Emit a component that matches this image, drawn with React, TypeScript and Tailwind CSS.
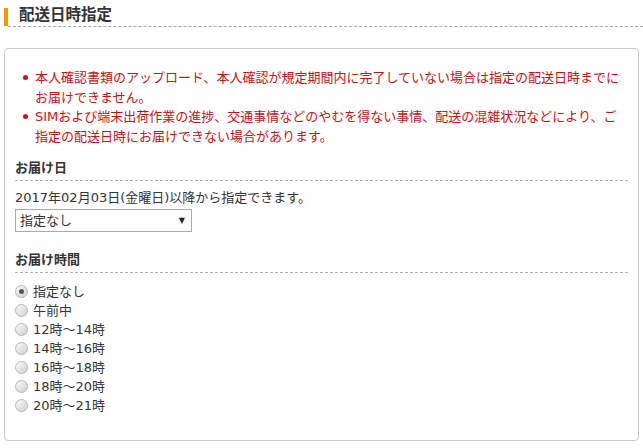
const notes = [
  ['本人確認書類のアップロード、本人確認が規定期間内に完了していない場合は指定の配送日時までに', 'お届けできません。'],
  ['SIMおよび端末出荷作業の進捗、交通事情などのやむを得ない事情、配送の混雑状況などにより、ご', '指定の配送日時にお届けできない場合があります。'],
];

const timeSlots = ['指定なし', '午前中', '12時～14時', '14時～16時', '16時～18時', '18時～20時', '20時～21時'];

function Radio({ checked }: { checked?: boolean }) {
  return (
    <span className="flex h-[13px] w-[13px] shrink-0 items-center justify-center rounded-full border border-[#b4b4b4] bg-linear-to-br from-[#fbfbfb] to-[#cfcfcf]">
      {checked && <span className="h-[5px] w-[5px] rounded-full bg-[#555]" />}
    </span>
  );
}

function SectionHeading({ children }: { children: React.ReactNode }) {
  return (
    <h3 className="border-b border-dashed border-[#b0b0b0] pb-[2px] text-[13px] font-bold leading-[20px] text-[#333]">
      {children}
    </h3>
  );
}

export default function App() {
  return (
    <div className="h-[448px] w-[643px] overflow-hidden bg-white font-['DejaVu_Sans','Noto_Sans_CJK_JP',sans-serif] text-[#333]">
      {/* page title */}
      <div className="pl-[4px] pt-[8px]">
        <div className="flex h-[18px] items-start">
          <span className="h-full w-[4px] bg-[#f39800]" />
          <h2 className="-mt-[2px] ml-[11px] text-[15.5px] font-bold leading-[18px] text-[#333]">配送日時指定</h2>
        </div>
        <div className="ml-[4px] border-t border-dashed border-[#a8a8a8]" />
      </div>

      <div className="mx-[4px] mt-[21px] h-[393px] rounded-[4px] border border-[#c8c8c8] px-[10px] pt-[19px]">
        <ul className="text-[13px] leading-[19.5px] text-[#cc1111]">
          {notes.map((lines, i) => (
            <li key={i} className="flex">
              <span className="flex h-[19.5px] w-[20px] shrink-0 items-center justify-center">
                <span className="h-[5px] w-[5px] rounded-full bg-[#cc1111]" />
              </span>
              <span className="whitespace-nowrap">
                {lines[0]}
                <br />
                {lines[1]}
              </span>
            </li>
          ))}
        </ul>

        <div className="mt-[12px]">
          <SectionHeading>お届け日</SectionHeading>
          <p className="mt-[7px] text-[13px] leading-[20px]">2017年02月03日(金曜日)以降から指定できます。</p>
          <div className="mt-[1px] flex h-[23px] w-[177px] items-center justify-between border border-[#a9a9a9] bg-white pl-[4px] pr-[6px] text-[13px]">
            <span>指定なし</span>
            <span className="text-[8px] leading-none text-[#222]">▼</span>
          </div>
        </div>

        <div className="mt-[18px]">
          <SectionHeading>お届け時間</SectionHeading>
          <div className="mt-[9px] flex flex-col">
            {timeSlots.map((slot, i) => (
              <label key={slot} className="flex h-[19px] items-center gap-[5px] text-[13px]">
                <Radio checked={i === 0} />
                <span className="leading-[19px]">{slot}</span>
              </label>
            ))}
          </div>
        </div>
      </div>
    </div>
  );
}
